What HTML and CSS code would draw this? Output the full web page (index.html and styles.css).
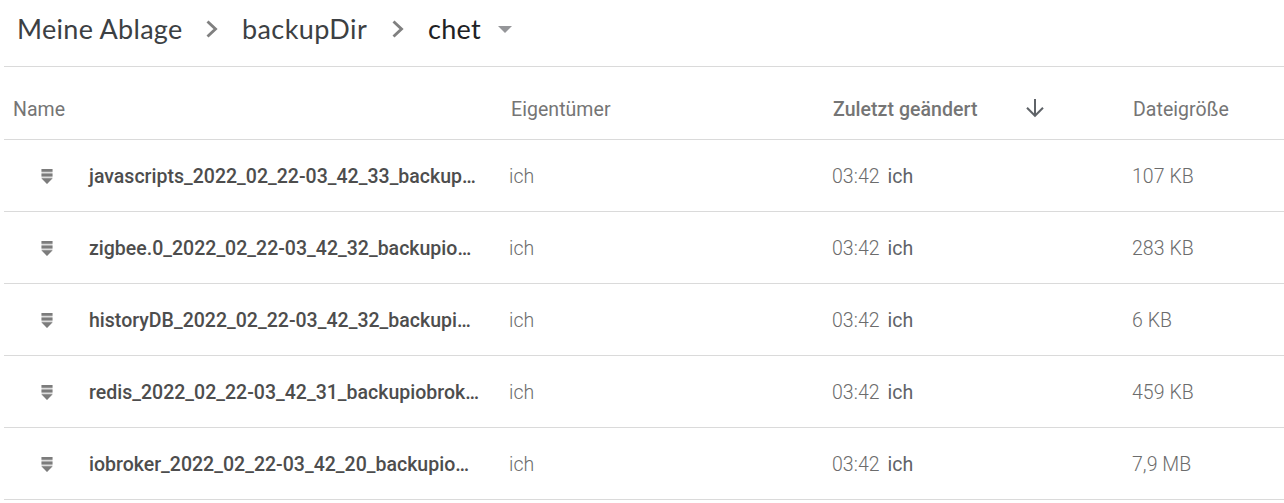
FILE: index.html
```html
<!DOCTYPE html>
<html lang="de">
<head>
  <meta charset="UTF-8" />
  <meta name="viewport" content="width=device-width, initial-scale=1.0" />
  <title>chet</title>
  <link rel="stylesheet" href="styles.css">
</head>
<body>
  <svg class="sprite" width="0" height="0" aria-hidden="true">
    <symbol id="archive" viewBox="0 0 12 16">
      <path d="M.5 1h11v10L6 16 .5 11z" fill="#ddd" />
      <path d="M.5 1h11v2.800H.5zM.5 5.500h11v3H.500zM.5 10.200h11L6 16z" fill="#7c7c7c" />
    </symbol>
    <symbol id="chevron" viewBox="0 0 12 18">
      <path d="M1.500 1.500L9.500 9l-8 7.500" fill="none" stroke="#808080" stroke-width="2.900" />
    </symbol>
  </svg>

  <nav class="breadcrumb">
    <span class="crumb crumb-root">Meine Ablage</span>
    <svg class="chevron"><use href="#chevron" /></svg>
    <span class="crumb crumb-dir">backupDir</span>
    <svg class="chevron"><use href="#chevron" /></svg>
    <span class="crumb crumb-current">chet</span>
    <span class="caret"></span>
  </nav>

  <main class="files">
    <div class="row header">
      <div class="name-head">Name</div>
      <div class="owner">Eigentümer</div>
      <div class="modified sorted">
        <span class="sort-label">Zuletzt geändert</span>
        <svg class="arrow" viewBox="0 0 20 20"><path d="M10 1v16.500M2 9.800l8 8 8-8" fill="none" stroke="#5f6368" stroke-width="2" /></svg>
      </div>
      <div class="size">Dateigröße</div>
    </div>
    <div class="row">
      <svg class="icon"><use href="#archive" /></svg>
      <div class="name">javascripts_2022_02_22-03_42_33_backup…</div>
      <div class="owner">ich</div>
      <div class="modified">03:42 <span class="by">ich</span></div>
      <div class="size">107 KB</div>
    </div>
    <div class="row">
      <svg class="icon"><use href="#archive" /></svg>
      <div class="name">zigbee.0_2022_02_22-03_42_32_backupio…</div>
      <div class="owner">ich</div>
      <div class="modified">03:42 <span class="by">ich</span></div>
      <div class="size">283 KB</div>
    </div>
    <div class="row">
      <svg class="icon"><use href="#archive" /></svg>
      <div class="name">historyDB_2022_02_22-03_42_32_backupi…</div>
      <div class="owner">ich</div>
      <div class="modified">03:42 <span class="by">ich</span></div>
      <div class="size">6 KB</div>
    </div>
    <div class="row">
      <svg class="icon"><use href="#archive" /></svg>
      <div class="name">redis_2022_02_22-03_42_31_backupiobrok…</div>
      <div class="owner">ich</div>
      <div class="modified">03:42 <span class="by">ich</span></div>
      <div class="size">459 KB</div>
    </div>
    <div class="row">
      <svg class="icon"><use href="#archive" /></svg>
      <div class="name">iobroker_2022_02_22-03_42_20_backupio…</div>
      <div class="owner">ich</div>
      <div class="modified">03:42 <span class="by">ich</span></div>
      <div class="size">7,9 MB</div>
    </div>
  </main>
</body>
</html>
```
FILE: styles.css
```css
* {
  margin: 0;
  padding: 0;
  box-sizing: border-box;
}

body {
  height: 503px;
  padding-left: 4px;
  overflow: hidden;
  background: #fff;
  font-family: Roboto, "Liberation Sans", sans-serif;
  font-size: 19.5px;
  color: #6c6c6c;
}

.sprite {
  display: block;
}

/* --- breadcrumb ----------------------------------------------------- */
.breadcrumb {
  display: flex;
  align-items: center;
  height: 67px;
  padding: 0 0 9px 13px;
  border-bottom: 1px solid #dadada;
  font-family: Lato, "Open Sans", sans-serif;
  font-size: 27px;
  letter-spacing: 0.3px;
  color: #3c4043;
}

.crumb {
  padding-bottom: 1px;
  white-space: nowrap;
}

.crumb-root {
  width: 189px;
}

.crumb-dir {
  width: 138px;
  margin-left: 24px;
  letter-spacing: 0.4px;
}

.crumb-dir + .chevron {
  margin-left: 12px;
}

.crumb-current {
  width: 54px;
  margin-left: 24px;
  color: #202124;
}

.chevron {
  flex: none;
  width: 12px;
  height: 18px;
}

.caret {
  margin: 1px 0 0 16px;
  border: 7px solid transparent;
  border-top-color: #959699;
  border-bottom: 0;
}

/* --- file list ------------------------------------------------------ */
.row {
  display: flex;
  align-items: center;
  height: 72px;
  padding-top: 2px;
  border-bottom: 1px solid #dadada;
  font-weight: 300;
  letter-spacing: 0.05px;
  white-space: nowrap;
}

.header {
  height: 73px;
  padding-top: 12px;
  font-weight: 400;
  color: #757575;
}

.name-head {
  width: 505px;
  padding-left: 9px;
}

.icon {
  flex: none;
  width: 12px;
  height: 16px;
  margin: 0 36px 2px 37px;
}

.name {
  width: 420px;
  font-weight: 500;
  letter-spacing: 0.01px;
  color: #4d4d4d;
}

.owner {
  width: 323px;
}

.header .owner {
  padding-left: 2px;
}

.modified {
  width: 300px;
}

.sorted {
  display: flex;
  align-items: center;
  padding-left: 1px;
  font-weight: 500;
}

.sort-label {
  width: 192px;
}

.arrow {
  width: 20px;
  height: 20px;
  margin-bottom: 2px;
}

.by {
  margin-left: 3px;
  font-weight: 400;
  color: #5f6368;
}

.header .size {
  padding-left: 1px;
}
```
